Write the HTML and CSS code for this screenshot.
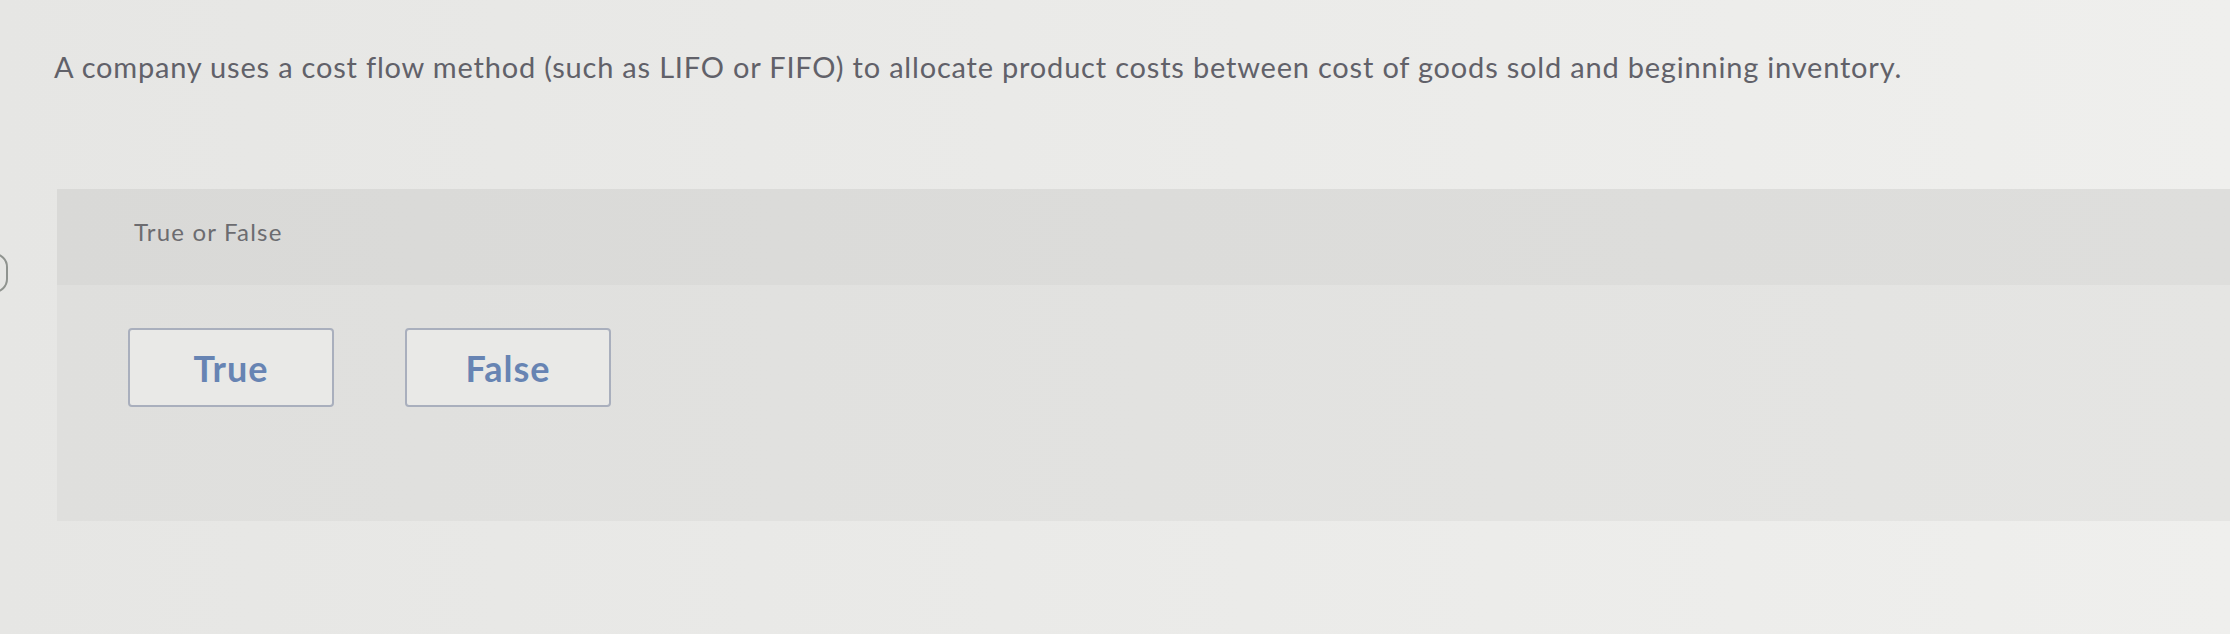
FILE: index.html
```html
<!DOCTYPE html>
<html>
<head>
  <title>True or False</title>
  <link rel="stylesheet" href="styles.css">
</head>
<body>
  <div class="page">
    <div class="side-tab"></div>
    <p class="question">A company uses a cost flow method (such as LIFO or FIFO) to allocate product costs between cost of goods sold and beginning inventory.</p>
    <div class="panel">
      <div class="panel-header">True or False</div>
      <div class="panel-body">
        <button type="button" class="choice">True</button>
        <button type="button" class="choice">False</button>
      </div>
    </div>
  </div>
</body>
</html>
```

FILE: styles.css
```css
/* Question page: prompt text above a grey answer panel */
html, body {
  margin: 0;
  height: 100%;
}
body {
  font-family: Lato, "Open Sans", Arial, sans-serif;
  background: linear-gradient(90deg, #e6e6e4 0%, #eaeae8 45%, #efefed 100%);
  color: #616169;
  overflow: hidden;
}
.page {
  position: relative;
  padding: 50px 0 0 54px;
}
/* edge of the collapsed side tab peeking in from the left */
.side-tab {
  position: absolute;
  left: -26px;
  top: 253px;
  width: 30px;
  height: 36px;
  border: 2px solid #8f938f;
  border-radius: 14px;
}
.question {
  margin: 0;
  font-size: 29px;
  line-height: 34px;
  letter-spacing: 0.8px;
}
.panel {
  margin: 105px 0 0 3px;
}
.panel-header {
  height: 96px;
  box-sizing: border-box;
  padding: 28px 0 0 77px;
  font-size: 24px;
  line-height: 30px;
  letter-spacing: 1.2px;
  color: #6c6c70;
  background: linear-gradient(90deg, #d9d9d7 0%, #dcdcda 50%, #dededc 100%);
}
.panel-body {
  height: 236px;
  box-sizing: border-box;
  padding: 43px 0 0 71px;
  display: flex;
  gap: 71px;
  align-items: flex-start;
  background: linear-gradient(90deg, #dfdfdd 0%, #e2e2e0 50%, #e5e5e3 100%);
}
.choice {
  width: 206px;
  height: 79px;
  border: 2px solid #a9afbd;
  border-radius: 4px;
  background: #e9e9e7;
  font-family: inherit;
  font-size: 36px;
  font-weight: 700;
  letter-spacing: 1px;
  color: #6784b3;
  cursor: pointer;
}
.choice:hover {
  background: #efefed;
}
```
